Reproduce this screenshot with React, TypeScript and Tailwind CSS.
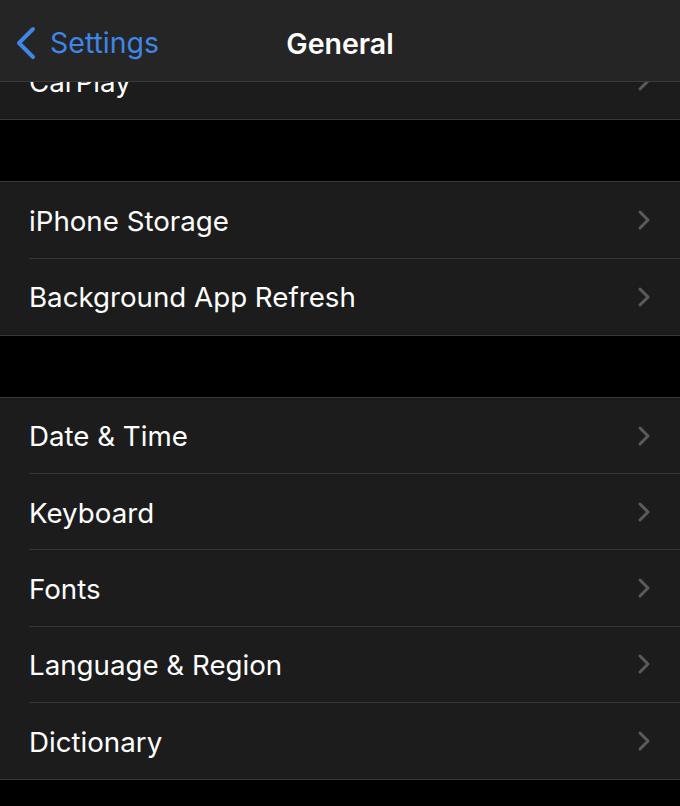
import React from "react";

const Chevron: React.FC = () => (
  <svg width="14" height="22" viewBox="0 0 14 22" fill="none" className="shrink-0">
    <path d="M3 3l8 8-8 8" stroke="#5b5b5d" strokeWidth="3" strokeLinecap="round" strokeLinejoin="round" />
  </svg>
);

const Row: React.FC<{ label: string; last?: boolean }> = ({ label, last }) => (
  <div className="flex h-[76.3px] items-center pl-[29px]">
    <div
      className={
        "flex h-full flex-1 items-center justify-between pr-[29px] " +
        (last ? "" : "border-b border-[#353535]")
      }
    >
      <span className="pt-[3px] text-[27.7px] text-white">{label}</span>
      <Chevron />
    </div>
  </div>
);

const Group: React.FC<{ items: string[] }> = ({ items }) => (
  <div className="border-y border-[#383838] bg-[#1c1c1c]">
    {items.map((it, i) => (
      <Row key={it} label={it} last={i === items.length - 1} />
    ))}
  </div>
);

export default function App() {
  return (
    <div className="relative h-[806px] w-[680px] overflow-hidden bg-black" style={{ fontFamily: "Inter, 'Noto Sans', sans-serif" }}>
      <div className="absolute inset-x-0 top-0 z-10 flex h-[82px] items-center border-b border-[#3a3a3a] bg-[#252525] pt-[5px]">
        <div className="flex items-center gap-[13px] pl-[15px]">
          <svg width="22" height="34" viewBox="0 0 22 34" fill="none">
            <path d="M18 3L4 17l14 14" stroke="#3f86e6" strokeWidth="4" strokeLinecap="round" strokeLinejoin="round" />
          </svg>
          <span className="text-[28.5px] text-[#3f86e6]">Settings</span>
        </div>
        <span className="absolute left-1/2 top-[23px] -translate-x-1/2 text-[28.5px] font-semibold text-white">General</span>
      </div>

      <div className="pt-[43px]">
        <div className="border-b border-[#383838] bg-[#1c1c1c]">
          <Row label="CarPlay" last />
        </div>
        <div className="h-[61px]" />
        <Group items={["iPhone Storage", "Background App Refresh"]} />
        <div className="h-[61px]" />
        <Group items={["Date & Time", "Keyboard", "Fonts", "Language & Region", "Dictionary"]} />
      </div>
    </div>
  );
}
